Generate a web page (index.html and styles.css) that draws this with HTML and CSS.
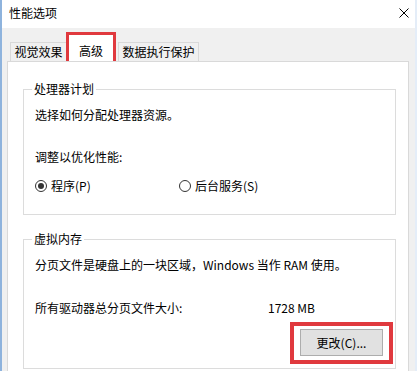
FILE: index.html
```html
<!DOCTYPE html>
<html lang="zh-CN">
<head>
<meta charset="utf-8">
<title>性能选项</title>
<link rel="stylesheet" href="styles.css">
</head>
<body>
<div class="window">
  <div class="titlebar">
    <span class="title">性能选项</span>
    <svg class="close" width="10" height="10" viewBox="0 0 10 10"><path d="M0.5 0.5L9.5 9.5M9.5 0.5L0.5 9.5" stroke="#000" stroke-width="1" fill="none"/></svg>
  </div>
  <div class="tabs">
    <div class="tab">视觉效果</div>
    <div class="tab tab-active">高级</div>
    <div class="tab tab-last">数据执行保护</div>
  </div>
  <div class="panel">
    <fieldset class="group group-cpu">
      <legend>处理器计划</legend>
      <p class="line first">选择如何分配处理器资源。</p>
      <p class="line adjust">调整以优化性能:</p>
      <div class="radios">
        <label class="radio radio-program"><span class="dot checked"></span>程序(P)</label>
        <label class="radio"><span class="dot"></span>后台服务(S)</label>
      </div>
    </fieldset>
    <fieldset class="group group-mem">
      <legend>虚拟内存</legend>
      <p class="line first">分页文件是硬盘上的一块区域，Windows 当作 RAM 使用。</p>
      <div class="line size-row"><span class="size-label">所有驱动器总分页文件大小:</span><span>1728 MB</span></div>
      <div class="btn-row">
        <div class="highlight"><button class="btn">更改(C)...</button></div>
      </div>
    </fieldset>
  </div>
</div>
</body>
</html>
```
FILE: styles.css
```css
html, body {
  margin: 0;
  padding: 0;
}
body {
  width: 417px;
  height: 371px;
  overflow: hidden;
  background: #e4edf8;
  font-family: "Noto Sans CJK SC", "Noto Sans", sans-serif;
  font-size: 12px;
  color: #000;
}
.window {
  box-sizing: border-box;
  width: 415px;
  height: 371px;
  background: #f0f0f0;
  border-left: 2px solid #8eb3dd;
  display: flex;
  flex-direction: column;
}
.titlebar {
  height: 28px;
  flex: none;
  background: #fff;
  display: flex;
  align-items: center;
  justify-content: space-between;
  padding: 0 6px 2px 7px;
  box-sizing: border-box;
}
.title {
  line-height: 16px;
}
.close {
  display: block;
}
.tabs {
  height: 33px;
  flex: none;
  display: flex;
  align-items: flex-end;
  padding-left: 8px;
}
.tab {
  box-sizing: border-box;
  height: 19px;
  line-height: 16px;
  padding: 1px 0 0 0;
  border: 1px solid #d9d9d9;
  border-bottom: none;
  background: #f0f0f0;
  width: 57px;
  text-align: center;
  white-space: nowrap;
}
.tab-active {
  width: 50px;
  height: 29px;
  margin-left: -1px;
  border: 3px solid #e0393e;
  border-bottom: none;
  background: #fff;
  padding-top: 8px;
  line-height: 16px;
  position: relative;
  z-index: 1;
}
.tab-last {
  width: 81px;
  margin-left: 2px;
}
.panel {
  flex: 1;
  margin-left: 5px;
  width: 402px;
  box-sizing: border-box;
  background: #fff;
  border: 1px solid #d9d9d9;
  border-bottom: none;
  padding: 0 12px 0 15px;
}
.group {
  margin: 0;
  padding: 0 2px 0 11px;
  border: 1px solid #dcdcdc;
  width: 373px;
  box-sizing: border-box;
  min-width: 0;
}
.group legend {
  margin-left: -3px;
  padding: 0 2px;
  line-height: 16px;
}
.group-cpu {
  margin-top: 19px;
  padding-bottom: 20px;
}
.group-mem {
  margin-top: 16px;
  padding-bottom: 4px;
}
.line {
  margin: 0;
  line-height: 16px;
  height: 16px;
  white-space: nowrap;
}
.line.first {
  margin-top: 10px;
}
.adjust {
  margin-top: 26px;
}
.radios {
  margin-top: 13px;
  display: flex;
  height: 16px;
  align-items: center;
}
.radio {
  display: flex;
  align-items: center;
  line-height: 16px;
}
.radio-program {
  width: 144px;
}
.dot {
  box-sizing: border-box;
  width: 12px;
  height: 12px;
  border: 1px solid #333;
  border-radius: 50%;
  margin-right: 4px;
  display: flex;
  align-items: center;
  justify-content: center;
  background: #fff;
}
.dot.checked::after {
  content: "";
  width: 6px;
  height: 6px;
  border-radius: 50%;
  background: #333;
}
.size-row {
  margin-top: 27px;
  display: flex;
}
.size-label {
  width: 233px;
}
.btn-row {
  display: flex;
  justify-content: flex-end;
  margin-top: 6px;
}
.highlight {
  border: 4px solid #e0393e;
  padding: 3px 6px 4px 6px;
}
.btn {
  display: block;
  box-sizing: border-box;
  width: 83px;
  height: 27px;
  background: #e1e1e1;
  border: 1px solid #adadad;
  font-family: "Noto Sans CJK SC", "Noto Sans", sans-serif;
  font-size: 12px;
  color: #000;
  padding: 0;
  line-height: 16px;
}
```
